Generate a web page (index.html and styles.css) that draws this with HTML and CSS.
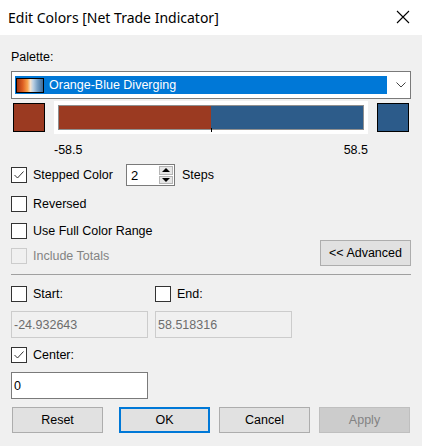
FILE: index.html
```html
<!DOCTYPE html>
<html>
<head>
<meta charset="utf-8">
<link rel="stylesheet" href="styles.css">
</head>
<body>
<div class="dialog">
  <div class="titlebar">
    <span class="title">Edit Colors [Net Trade Indicator]</span>
    <svg class="close" width="14" height="14" viewBox="0 0 14 14"><path d="M1 1 L13 13 M13 1 L1 13" stroke="#000" stroke-width="1.1" fill="none"/></svg>
  </div>
  <div class="content">
    <div class="label-row">Palette:</div>
    <div class="select">
      <div class="option">
        <span class="grad"></span>
        <span class="opt-text">Orange-Blue Diverging</span>
      </div>
      <svg class="chev" width="10" height="6" viewBox="0 0 10 6"><path d="M0.5 0.5 L5 5 L9.5 0.5" stroke="#444" stroke-width="1" fill="none"/></svg>
    </div>
    <div class="color-row">
      <span class="swatch red"></span>
      <div class="bar-frame">
        <div class="bar">
          <span class="half red"></span>
          <span class="half blue"></span>
          <span class="tick"></span>
        </div>
      </div>
      <span class="swatch blue"></span>
    </div>
    <div class="range-row">
      <span>-58.5</span>
      <span>58.5</span>
    </div>
    <div class="row stepped">
      <span class="cb checked"><svg width="14" height="14" viewBox="0 0 14 14"><path d="M2.5 7 L5.5 10 L11.5 3.5" stroke="#333" stroke-width="1" fill="none"/></svg></span>
      <span class="txt">Stepped Color</span>
      <div class="spin">
        <span class="spin-val">2</span>
        <div class="spin-btns">
          <span class="sb"><span class="tri up"></span></span>
          <span class="sb"><span class="tri down"></span></span>
        </div>
      </div>
      <span class="txt">Steps</span>
    </div>
    <div class="row rev">
      <span class="cb"></span><span class="txt">Reversed</span>
    </div>
    <div class="row full">
      <span class="cb"></span><span class="txt">Use Full Color Range</span>
    </div>
    <div class="row totals">
      <div class="totals-left">
        <span class="cb disabled"></span><span class="txt dis">Include Totals</span>
      </div>
      <button class="btn adv">&lt;&lt; Advanced</button>
    </div>
    <div class="sep"></div>
    <div class="row se">
      <div class="cell"><span class="cb"></span><span class="txt">Start:</span></div>
      <div class="cell"><span class="cb"></span><span class="txt">End:</span></div>
    </div>
    <div class="inputs">
      <div class="field ro">-24.932643</div>
      <div class="field ro">58.518316</div>
    </div>
    <div class="row center">
      <span class="cb checked"><svg width="14" height="14" viewBox="0 0 14 14"><path d="M2.5 7 L5.5 10 L11.5 3.5" stroke="#333" stroke-width="1" fill="none"/></svg></span>
      <span class="txt">Center:</span>
    </div>
    <div class="inputs single">
      <div class="field edit">0</div>
    </div>
    <div class="buttons">
      <button class="btn reset">Reset</button>
      <button class="btn ok">OK</button>
      <button class="btn cancel">Cancel</button>
      <button class="btn apply">Apply</button>
    </div>
  </div>
</div>
</body>
</html>
```
FILE: styles.css
```css
* { box-sizing: border-box; }
html, body { margin: 0; padding: 0; }
body {
  width: 422px;
  height: 446px;
  background: #f0f0f0;
  font-family: "Liberation Sans", Arial, sans-serif;
  font-size: 12.5px;
  color: #000;
  overflow: hidden;
}
.dialog { width: 422px; height: 446px; background: #f0f0f0; }
.titlebar {
  height: 35px;
  background: #fff;
  display: flex;
  align-items: center;
  justify-content: space-between;
  padding: 0 12px 0 8px;
}
.title {
  font-family: "Noto Sans", "Open Sans", sans-serif;
  font-size: 14px;
  color: #000;
  margin-top: -1px;
}
.close { display: block; margin-top: -2px; }
.content { padding: 0 11px; }
.label-row {
  margin-top: 12px;
  height: 20px;
  display: flex;
  align-items: center;
}
.select {
  margin-top: 4px;
  height: 28px;
  border: 1px solid #7a7a7a;
  background: #fff;
  display: flex;
  align-items: center;
  padding: 0 4px 0 3px;
}
.option {
  flex: 1;
  height: 18px;
  background: #0078d7;
  display: flex;
  align-items: center;
  color: #fff;
  margin-right: 9px;
}
.grad {
  width: 28px;
  height: 15px;
  margin-left: 1px;
  border: 1px solid #000;
  background: linear-gradient(to right, #a23512 0%, #dd5e22 22%, #f7a14c 40%, #f3e2cf 52%, #bcd1e4 62%, #7aa2c6 78%, #3c6a98 100%);
}
.opt-text { margin-left: 5px; }
.chev { display: block; }
.color-row {
  margin-top: 2px;
  height: 33px;
  display: flex;
  align-items: center;
}
.swatch {
  width: 32px;
  height: 29px;
  border: 1px solid #000;
  display: block;
}
.swatch.red { background: #9b3a21; margin-left: 2px; }
.swatch.blue { background: #2c5b8a; margin-left: 9px; }
.bar-frame {
  margin-left: 9px;
  width: 314px;
  height: 33px;
  background: #fff;
  padding: 4px;
}
.bar {
  position: relative;
  height: 25px;
  border: 1px solid #8f8f8f;
  display: flex;
}
.half { flex: 1; display: block; }
.half.red { background: #9b3a21; }
.half.blue { background: #2d5c8a; }
.tick {
  position: absolute;
  left: 152px;
  bottom: -3px;
  width: 1px;
  height: 4px;
  background: #000;
}
.range-row {
  margin-top: 6px;
  height: 20px;
  display: flex;
  justify-content: space-between;
  align-items: center;
  padding: 0 43px 0 43px;
}
.row {
  display: flex;
  align-items: center;
}
.cb {
  width: 16px;
  height: 16px;
  border: 1px solid #333;
  background: #fff;
  display: flex;
  align-items: center;
  justify-content: center;
  flex: none;
}
.cb.disabled { border-color: #cccccc; background: #f0f0f0; }
.txt { margin-left: 6px; }
.txt.dis { color: #838383; }
.stepped { margin-top: 4px; height: 22px; }
.spin {
  margin-left: 13px;
  width: 49px;
  height: 22px;
  border: 1px solid #7a7a7a;
  background: #fff;
  display: flex;
  align-items: center;
  padding: 1px 1px 1px 4px;
}
.spin-val { flex: 1; font-size: 13px; }
.spin-btns {
  width: 14px;
  height: 18px;
  display: flex;
  flex-direction: column;
  gap: 1px;
}
.sb {
  flex: 1;
  background: #e6e6e6;
  border: 1px solid #b5b5b5;
  display: flex;
  align-items: center;
  justify-content: center;
}
.tri { width: 0; height: 0; border-left: 4px solid transparent; border-right: 4px solid transparent; }
.tri.up { border-bottom: 4px solid #000; }
.tri.down { border-top: 4px solid #000; }
.stepped .spin + .txt { margin-left: 7px; }
.rev { margin-top: 8px; height: 20px; }
.full { margin-top: 7px; height: 20px; }
.totals {
  margin-top: -1px;
  height: 26px;
  justify-content: space-between;
}
.totals-left { display: flex; align-items: center; margin-top: 6px; }
.btn {
  font-family: "Liberation Sans", Arial, sans-serif;
  font-size: 12.5px;
  height: 26px;
  width: 91px;
  background: #e1e1e1;
  border: 1px solid #adadad;
  color: #000;
  padding: 0;
}
.adv { margin-right: 0; }
.sep {
  margin-top: 8px;
  height: 1px;
  background: #a0a0a0;
}
.se { margin-top: 9px; height: 20px; }
.cell { width: 144px; display: flex; align-items: center; }
.inputs {
  margin-top: 7px;
  display: flex;
  gap: 7px;
}
.field {
  width: 137px;
  height: 27px;
  display: flex;
  align-items: center;
  padding-left: 2px;
}
.field.ro { background: #f0f0f0; border: 1px solid #cccccc; color: #6d6d6d; }
.field.edit { background: #fff; border: 1px solid #7a7a7a; color: #000; }
.center { margin-top: 7px; height: 20px; }
.buttons {
  margin-top: 8px;
  display: flex;
  padding-left: 1px;
}
.ok { margin-left: 16px; border: 2px solid #0078d7; }
.cancel { margin-left: 9px; }
.apply { margin-left: 9px; background: #cccccc; border-color: #bfbfbf; color: #838383; }
```
